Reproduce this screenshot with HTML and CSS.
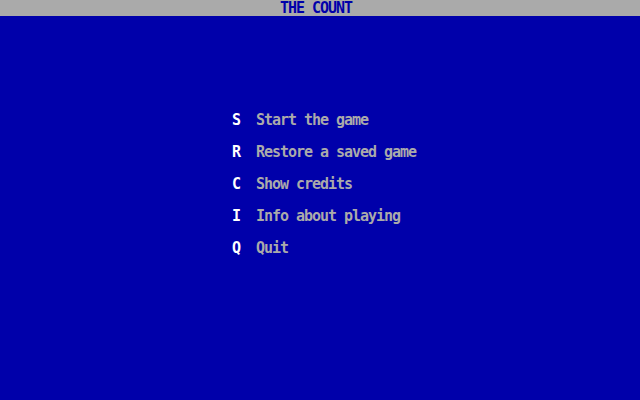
FILE: index.html
```html
<!DOCTYPE html>
<html>
<head>
<meta charset="utf-8">
<link rel="stylesheet" href="styles.css">
</head>
<body>
<div class="screen">
  <div class="titlebar"><span class="title">THE COUNT</span></div>
  <ul class="menu">
    <li class="item"><span class="key">S</span><span class="label">Start the game</span></li>
    <li class="item"><span class="key">R</span><span class="label">Restore a saved game</span></li>
    <li class="item"><span class="key">C</span><span class="label">Show credits</span></li>
    <li class="item"><span class="key">I</span><span class="label">Info about playing</span></li>
    <li class="item"><span class="key">Q</span><span class="label">Quit</span></li>
  </ul>
</div>
</body>
</html>
```
FILE: styles.css
```css
html, body {
  margin: 0;
  padding: 0;
  background: #0000aa;
}
.screen {
  width: 640px;
  height: 400px;
  background: #0000aa;
  font-family: "DejaVu Sans Mono", "Liberation Mono", monospace;
  font-weight: bold;
  font-size: 15px;
  letter-spacing: -1.03px;
  line-height: 16px;
  overflow: hidden;
}
.titlebar {
  height: 16px;
  background: #aaaaaa;
  color: #0000aa;
  display: flex;
  justify-content: center;
  padding-right: 8px;
}
.title {
  white-space: pre;
}
.menu {
  list-style: none;
  margin: 96px 0 0 232px;
  padding: 0;
  display: flex;
  flex-direction: column;
  gap: 16px;
}
.item {
  display: flex;
  height: 16px;
}
.key {
  width: 24px;
  color: #ffffff;
}
.label {
  color: #aaaaaa;
  white-space: pre;
}
```
